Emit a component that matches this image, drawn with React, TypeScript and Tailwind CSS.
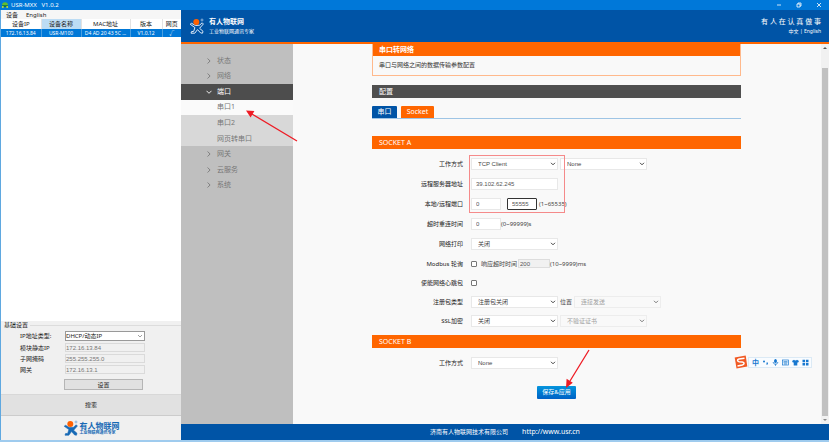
import type { ReactNode } from "react";

const cjk = "font-['Noto_Sans','Noto_Sans_CJK_SC',sans-serif]";
const control = "font-['Liberation_Sans','Noto_Sans_CJK_SC',sans-serif]";

function Chevron() {
  return (
    <svg viewBox="0 0 6 4" className="pointer-events-none absolute top-1 right-[2px] h-1 w-[6px]" fill="none" stroke="#444" strokeWidth="1">
      <path d="M1 .8 3 2.8 5 .8" />
    </svg>
  );
}

function Select({ id, label, value, muted = false }: { id: string; label?: string; value: string; muted?: boolean }) {
  return (
    <span className={`relative block h-3 w-[87px] shrink-0 ${muted ? "opacity-70" : ""}`}>
      <select
        id={id}
        aria-label={label}
        disabled={muted}
        className={`${control} block h-3 w-full appearance-none border border-[#e8e8e8] pl-[6px] text-[6px] leading-[10px] opacity-100 ${muted ? "bg-[#fafafa] text-[#777]" : "bg-white text-[#444]"}`}
      >
        <option>{value}</option>
      </select>
      <Chevron />
    </span>
  );
}

function Row({ label, htmlFor, short = false, children }: { label: string; htmlFor: string; short?: boolean; children: ReactNode }) {
  return (
    <div className={`flex items-center ${short ? "h-[19px]" : "h-5"}`}>
      <label htmlFor={htmlFor} className="mr-2 w-[91px] shrink-0 text-right text-[6px] leading-[10px] whitespace-nowrap text-[#222]">
        {label}
      </label>
      {children}
    </div>
  );
}

const textBox = `${control} h-3 shrink-0 border border-[#e8e8e8] bg-white px-1 text-[6px] leading-[10px] text-[#555]`;
const hint = "text-[6px] leading-[10px] whitespace-nowrap text-[#444]";
const tick = "h-[6px] w-[6px] shrink-0 appearance-none rounded-[1px] border border-[#777] bg-white";

function Logo({ outlined, className }: { outlined: boolean; className: string }) {
  return (
    <svg viewBox="0 0 16 16" className={className}>
      <path
        d="M1.2 6.2 2.6 5.3 6.4 7.5 10.5 7.2 13.2 4.8 14.4 6 11.7 9 10.6 10.3 14 13.3 13.5 15.2 11.7 15 8.5 11.6 5.8 15.2 2 15.2 2.5 13.6 4.7 13.4 5.9 9.6Z"
        fill={outlined ? "none" : "#1769b5"}
        stroke={outlined ? "#dce9f7" : "#1769b5"}
        strokeWidth={outlined ? 1 : 0.6}
        strokeLinejoin="round"
      />
      <circle cx="7.3" cy="4" r="3" fill="#ff6100" />
      <circle cx="13" cy="2" r="1" fill="none" stroke={outlined ? "#b8d1ec" : "#68a0d5"} strokeWidth=".7" />
    </svg>
  );
}

function TitleBar() {
  return (
    <header className="flex h-[10px] shrink-0 items-center bg-[#0078d9] text-white">
      <svg viewBox="0 0 8 7" className="ml-[1px] h-[7px] w-2">
        <path d="M1 3.3a3 3 0 0 1 6 0Z" fill="#62bd2e" />
        <path d="M1 3.3h6L5.8 5H2.2Z" fill="#187a34" />
        <circle cx="1.8" cy="5" r="1" fill="#c0e03a" />
        <circle cx="6.2" cy="5" r="1" fill="#c0e03a" />
      </svg>
      <h1 className="ml-[2px] text-[6px] leading-[10px] whitespace-pre">USR-MXX   V1.0.2</h1>
      <div className="mr-[7px] ml-auto flex gap-[14px]">
        <button aria-label="最小化" className="h-[6px] w-[6px]">
          <svg viewBox="0 0 6 6" stroke="white" strokeWidth=".8"><path d="M1 3h4" /></svg>
        </button>
        <button aria-label="还原" className="h-[6px] w-[6px]">
          <svg viewBox="0 0 6 6" fill="none" stroke="white" strokeWidth=".8"><path d="M1 2h3v3H1ZM2 2V1h3v3H4" /></svg>
        </button>
        <button aria-label="关闭" className="h-[6px] w-[6px]">
          <svg viewBox="0 0 6 6" stroke="white" strokeWidth=".8"><path d="m1 1 4 4M5 1 1 5" /></svg>
        </button>
      </div>
    </header>
  );
}

const addresses = [
  { id: "static-ip", label: "模块静态IP", value: "172.16.13.84" },
  { id: "mask", label: "子网掩码", value: "255.255.255.0" },
  { id: "gateway", label: "网关", value: "172.16.13.1" },
];

function DevicePanel() {
  return (
    <aside className="flex w-[181px] shrink-0 flex-col border-l border-[#5fa8e0] bg-[#f0f0f0] text-[6px] leading-2 text-[#222]">
      <nav className="flex h-[9px] items-center gap-2 bg-[#f6f6f6] pl-[5px]">
        <button>设备</button>
        <button>English</button>
      </nav>
      <div className="flex-1 bg-white">
        <table className="w-full table-fixed border-collapse text-center whitespace-nowrap">
          <colgroup>
            <col className="w-10" />
            <col className="w-10" />
            <col className="w-[49px]" />
            <col className="w-8" />
            <col />
          </colgroup>
          <thead>
            <tr className="h-[10px]">
              <th className="border-r border-[#e2e2e2] p-0 font-normal">设备IP</th>
              <th className="border-r border-[#e2e2e2] bg-[#bcdcf4] p-0 font-normal">设备名称</th>
              <th className="border-r border-[#e2e2e2] p-0 font-normal">MAC地址</th>
              <th className="border-r border-[#e2e2e2] p-0 font-normal">版本</th>
              <th className="p-0 font-normal">网页</th>
            </tr>
          </thead>
          <tbody>
            <tr className="h-2 bg-[#0078d7] text-[5px] text-white">
              <td className="border-r border-[#4b9fe0] p-0">172.16.13.84</td>
              <td className="border-r border-[#4b9fe0] p-0">USR-M100</td>
              <td className="border-r border-[#4b9fe0] p-0">D4 AD 20 43 5C ...</td>
              <td className="border-r border-[#4b9fe0] p-0">V1.0.12</td>
              <td className="p-0">√</td>
            </tr>
          </tbody>
        </table>
      </div>
      <section className="border-b border-[#d8d8d8] pb-1">
        <h2 className="flex h-2 items-center gap-[2px] pl-[3px] after:h-px after:flex-1 after:bg-[#dcdcdc]">基础设置</h2>
        <div className="flex flex-col gap-[2px] pt-[2px]">
          <div className="flex items-center">
            <label htmlFor="ip-type" className="w-11 shrink-0 pl-[19px] whitespace-nowrap">IP地址类型:</label>
            <span className="relative ml-5 block h-[10px] w-20">
              <select id="ip-type" className="block h-[10px] w-full appearance-none border border-[#999] bg-white text-[6px] leading-2">
                <option>DHCP/动态IP</option>
              </select>
              <svg viewBox="0 0 6 4" className="pointer-events-none absolute top-[3px] right-[2px] h-1 w-[6px]" fill="none" stroke="#777" strokeWidth=".7">
                <path d="m1 1 2 2 2-2" />
              </svg>
            </span>
          </div>
          {addresses.map((a) => (
            <div key={a.id} className="flex items-center">
              <label htmlFor={a.id} className="w-11 shrink-0 pl-[19px] whitespace-nowrap">{a.label}</label>
              <input id={a.id} disabled defaultValue={a.value} className={`${control} ml-5 h-[9px] w-20 border border-[#dadada] bg-[#f0f0f0] text-[6px] leading-[7px] text-[#777]`} />
            </div>
          ))}
        </div>
        <button className="mt-[5px] ml-[63px] block h-[11px] w-[79px] border border-[#b5b5b5] bg-[#e1e1e1]">设置</button>
      </section>
      <button className="h-[21px] border-b border-[#ccc] bg-[#e1e1e1]">搜索</button>
      <div className="flex h-6 items-center justify-center gap-[1px] text-[#1769b5]">
        <Logo outlined={false} className="h-4 w-4" />
        <div className="whitespace-nowrap">
          <p className="text-[8px] leading-[9px] font-bold">有人物联网</p>
          <p className="text-[4px] leading-[6px] font-bold">工业物联网通讯专家</p>
        </div>
      </div>
    </aside>
  );
}

function NavItem({ label, open = false }: { label: string; open?: boolean }) {
  return (
    <a href="#" className={`flex items-center gap-[5px] pl-[25px] ${open ? "bg-[#4d4d4d] text-white" : ""}`}>
      <svg viewBox="0 0 6 6" className="h-[6px] w-[6px]" fill="none" stroke="currentColor" strokeWidth=".9">
        <path d={open ? "M.5 1.8 3 4.3l2.5-2.5" : "m1.6.5 2.5 2.5-2.5 2.5"} />
      </svg>
      {label}
    </a>
  );
}

function SideNav() {
  return (
    <nav className="w-28 shrink-0 bg-[#bfbfbf] pt-[9px] text-[7px] leading-[10px] text-[#777]">
      <div className="grid h-[140px] grid-rows-9">
        <NavItem label="状态" />
        <NavItem label="网络" />
        <NavItem label="端口" open />
        <a href="#" className="flex items-center bg-[#fafafa] pl-9">串口1</a>
        <a href="#" className="flex items-center bg-[#d8d8d8] pl-9">串口2</a>
        <a href="#" className="flex items-center bg-[#d8d8d8] pl-9">网页转串口</a>
        <NavItem label="网关" />
        <NavItem label="云服务" />
        <NavItem label="系统" />
      </div>
    </nav>
  );
}

function InputBar() {
  return (
    <div className="absolute top-[355px] right-[17px] flex h-[14px] items-center text-[#1878d0]">
      <svg viewBox="0 0 14 14" className="z-10 h-[14px] w-[14px]">
        <path d="M.7 2.5 11.7.4l1.6 11L2.5 13.6Z" fill="#f15a24" />
        <path d="M10.5 3.2 5 4.1c-2.1.5-1.8 2.4.1 2.6l3.2.2c2.4.2 2.3 2.6.1 3.1l-4.9 1" fill="none" stroke="white" strokeWidth="1.5" />
      </svg>
      <div className="flex h-[11px] items-center gap-[3px] border border-[#dceaf5] bg-[#f9fcff] pr-[2px] pl-[3px]">
        <span className="text-[7px] leading-[9px] font-bold">中</span>
        <svg viewBox="0 0 7 7" className="h-[7px] w-[7px]" fill="currentColor"><circle cx="2" cy="2.5" r="1" /><path d="M4.5 3.5h1.4v1.4L5 6h-.6l.4-1.1h-.3Z" /></svg>
        <svg viewBox="0 0 7 7" className="h-[7px] w-[7px]" fill="none" stroke="currentColor"><rect x="2.6" y=".5" width="1.8" height="3.2" rx=".9" fill="currentColor" /><path d="M1.2 3c0 3 4.6 3 4.6 0M3.5 5.2v1.6" strokeWidth=".8" /></svg>
        <svg viewBox="0 0 7 7" className="h-[7px] w-[7px]" fill="none" stroke="currentColor" strokeWidth=".7"><rect x=".5" y="1" width="6" height="5" /><path d="M1.5 2.6h4M1.5 3.8h4M2 5h3" /></svg>
        <svg viewBox="0 0 7 7" className="h-[7px] w-[7px]" fill="currentColor"><path d="M2 .7c.6.9 2.4.9 3 0l2 1.4-1 1.6-.7-.4v3.2H1.7V3.3l-.7.4-1-1.6Z" /></svg>
        <svg viewBox="0 0 7 7" className="h-[7px] w-[7px]" fill="currentColor"><path d="M.5.8h2.6v2.5H.5ZM4 .8h2.5v2.5H4ZM.5 4h2.6v2.5H.5ZM4 4h2.5v2.5H4Z" /></svg>
      </div>
    </div>
  );
}

function Arrows() {
  return (
    <svg width="829" height="442" className="pointer-events-none absolute top-0 left-0" stroke="#ee1c25" fill="#ee1c25">
      <path d="m297 141-45-27M589 350l-19 31" strokeWidth="1.3" />
      <path d="m246 110.500 8.400.500-3.800 6.500ZM566 388l.600-9.200 6.200 4Z" stroke="none" />
    </svg>
  );
}

function Bar({ children }: { children: ReactNode }) {
  return <h2 className="h-[13px] bg-[#ff6600] pl-[7px] text-[7px] leading-[13px] text-white">{children}</h2>;
}

function Settings() {
  return (
    <main className="min-w-0 flex-1 bg-[#f9f9f9] pr-20 pl-[79px]">
      <section className="border border-t-0 border-[#ffb98c]">
        <h2 className="h-3 bg-[#ff6600] pl-[6px] text-[7px] leading-3 font-bold text-white">串口转网络</h2>
        <p className="h-[19px] pl-[6px] text-[6px] leading-[19px] text-[#333]">串口与网络之间的数据传输参数配置</p>
      </section>
      <h2 className="mt-[9px] h-[13px] bg-[#4f4f4f] pl-[7px] text-[7px] leading-[13px] text-white">配置</h2>
      <div className="mt-2 flex h-[13px] gap-1 border-b border-[#9fc5e5] text-[7px] leading-3 text-white">
        <button className="w-[25px] rounded-t-[1px] bg-[#0054a6]">串口</button>
        <button className="w-[33px] rounded-t-[1px] bg-[#ff6600]">Socket</button>
      </div>
      <form className="mt-[17px]">
        <Bar>SOCKET A</Bar>
        <div className="relative pt-[5px]">
          <Row label="工作方式" htmlFor="mode-a">
            <Select id="mode-a" value="TCP Client" />
            <span className="w-[2px]" />
            <Select id="proto-a" label="协议" value="None" />
          </Row>
          <Row label="远程服务器地址" htmlFor="server">
            <input id="server" defaultValue="39.102.62.245" className={`${textBox} w-[87px]`} />
          </Row>
          <Row label="本地/远程端口" htmlFor="local-port">
            <input id="local-port" defaultValue="0" className={`${textBox} mr-[6px] w-[30px]`} />
            <input aria-label="远程端口" defaultValue="55555" className={`${control} mr-[2px] h-3 w-[30px] shrink-0 rounded-[1px] border border-[#333] bg-white px-1 text-[6px] leading-[10px] text-[#555]`} />
            <span className={hint}>(1~65535)</span>
          </Row>
          <Row label="超时重连时间" htmlFor="retry">
            <input id="retry" defaultValue="0" className={`${textBox} w-[30px]`} />
            <span className={hint}>(0~99999)s</span>
          </Row>
          <Row label="网络打印" htmlFor="print">
            <Select id="print" value="关闭" />
          </Row>
          <Row label="Modbus 轮询" htmlFor="modbus" short>
            <input id="modbus" type="checkbox" className={tick} />
            <label htmlFor="timeout" className={`${hint} ml-1`}>响应超时时间</label>
            <input id="timeout" disabled defaultValue="200" className={`${control} ml-[1px] h-[9px] w-8 shrink-0 border border-[#ddd] bg-[#f1f1f1] px-[1px] text-[6px] leading-[7px] text-[#555]`} />
            <span className={hint}>(10~9999)ms</span>
          </Row>
          <Row label="使能网络心跳包" htmlFor="heartbeat" short>
            <input id="heartbeat" type="checkbox" className={tick} />
          </Row>
          <Row label="注册包类型" htmlFor="register" short>
            <Select id="register" value="注册包关闭" />
            <label htmlFor="position" className={`${hint} mr-[2px] ml-[2px]`}>位置</label>
            <Select id="position" value="连接发送" muted />
          </Row>
          <Row label="SSL加密" htmlFor="ssl">
            <Select id="ssl" value="关闭" />
            <span className="w-[2px]" />
            <Select id="verify" label="证书验证" value="不验证证书" muted />
          </Row>
          <div className="pointer-events-none absolute top-[6px] left-[97px] h-[58px] w-24 border border-[#f58a8a]" />
        </div>
        <div className="mt-1">
          <Bar>SOCKET B</Bar>
        </div>
        <div className="pt-[5px]">
          <Row label="工作方式" htmlFor="mode-b">
            <Select id="mode-b" value="None" />
          </Row>
        </div>
        <button type="button" className="mx-auto mt-[13px] block h-[13px] w-[39px] rounded-[1px] bg-linear-to-b from-[#0795dd] to-[#0061c5] text-[6px] leading-[13px] text-white">
          保存&amp;应用
        </button>
      </form>
    </main>
  );
}

export default function App() {
  return (
    <div className={`${cjk} relative flex h-screen flex-col overflow-hidden border-b-2 border-[#9fcbee] bg-[#f0f0f0]`}>
      <TitleBar />
      <div className="flex min-h-0 flex-1">
        <DevicePanel />
        <div className="flex min-w-0 flex-1 flex-col">
          <header className="flex h-[34px] shrink-0 items-center border-b-2 border-[#ff6600] bg-[#0054a6] px-2 text-white">
            <Logo outlined className="h-4 w-4" />
            <div className="ml-1 whitespace-nowrap">
              <p className="text-[7px] leading-[10px] font-bold">有人物联网</p>
              <p className="text-[5px] leading-2">工业物联网通讯专家</p>
            </div>
            <div className="ml-auto text-right whitespace-nowrap">
              <p className="text-[7px] leading-[10px]">有 人 在 认 真 做 事</p>
              <p className="text-[5px] leading-[9px]"><a href="#">中文</a> | <a href="#">English</a></p>
            </div>
          </header>
          <div className="flex min-h-0 flex-1">
            <SideNav />
            <Settings />
            <div className="flex w-2 shrink-0 flex-col items-center bg-[#f1f1f1]">
              <svg viewBox="0 0 8 8" className="mb-4 h-2 w-2" fill="#555"><path d="m4 3 2 2H2Z" /></svg>
              <div className="w-[6px] flex-1 bg-[#c1c1c1]" />
              <svg viewBox="0 0 8 8" className="h-2 w-2" fill="#888"><path d="m4 5 2-2H2Z" /></svg>
            </div>
          </div>
          <footer className="flex h-4 shrink-0 items-center justify-center gap-[14px] bg-[#0054a6] text-[6px] leading-[10px] text-white">
            <span>济南有人物联网技术有限公司</span>
            <a href="#" className="text-[7px]">http://www.usr.cn</a>
          </footer>
        </div>
      </div>
      <InputBar />
      <Arrows />
    </div>
  );
}
